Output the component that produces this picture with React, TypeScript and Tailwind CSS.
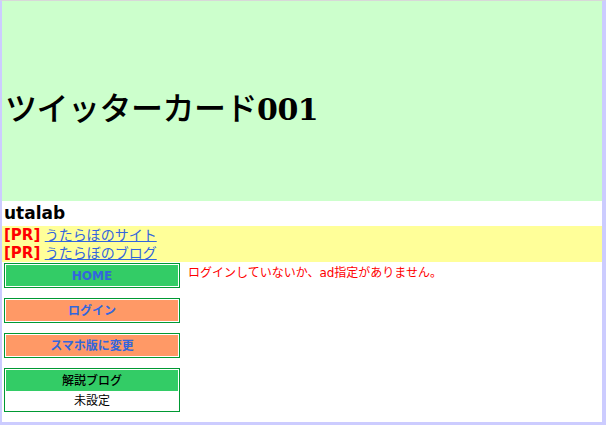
import React from "react";

const sans = { fontFamily: '"DejaVu Sans", "Noto Sans CJK JP", sans-serif' };

function Btn({ label, bg }: { label: string; bg: string }) {
  return (
    <div className="border border-[#009933] p-px">
      <div className={`${bg} h-[21px] flex items-center justify-center text-[12px] font-bold text-[#3366dd]`}>
        {label}
      </div>
    </div>
  );
}

export default function App() {
  return (
    <div
      className="h-[425px] w-[606px] box-border border-t border-t-[#d8d8d8] border-l-2 border-r-4 border-b-[3px] border-l-[#ccccff] border-r-[#ccccff] border-b-[#ccccff] bg-white overflow-hidden"
      style={sans}
    >
      <div className="h-[200px] bg-[#ccffcc] flex items-center pl-[3px] pt-[16px]">
        <h1
          className="text-[32px] font-bold text-black leading-none tracking-[-0.5px]"
          style={{ fontFamily: '"DejaVu Serif", "Noto Sans CJK JP", serif' }}
        >
          <span className="font-medium">ツイッターカード</span>
          <span className="text-[30px]">001</span>
        </h1>
      </div>
      <div className="h-[25px] flex items-center pl-[2px] text-[17px] font-bold text-black">utalab</div>
      <div className="bg-[#ffff99] px-[2px] text-[14px] leading-[18px]">
        <div>
          <span className="font-bold text-[15px] text-[#ff0000]">[PR]</span>{" "}
          <a href="#" className="text-[#3366dd] underline">うたらぼのサイト</a>
        </div>
        <div>
          <span className="font-bold text-[15px] text-[#ff0000]">[PR]</span>{" "}
          <a href="#" className="text-[#3366dd] underline">うたらぼのブログ</a>
        </div>
      </div>
      <div className="flex pl-[2px] pt-px">
        <div className="w-[176px] flex flex-col gap-[10px]">
          <Btn label="HOME" bg="bg-[#33cc66]" />
          <Btn label="ログイン" bg="bg-[#ff9966]" />
          <Btn label="スマホ版に変更" bg="bg-[#ff9966]" />
          <div className="border border-[#009933] p-px">
            <div className="bg-[#33cc66] h-[21px] flex items-center justify-center text-[12px] font-medium text-black">
              解説ブログ
            </div>
            <div className="h-[19px] flex items-center justify-center text-[12px] text-black">未設定</div>
          </div>
        </div>
        <div className="pl-[8px] pt-[1px] text-[12px] text-[#ff0000] leading-[18px]">
          ログインしていないか、ad指定がありません。
        </div>
      </div>
    </div>
  );
}
